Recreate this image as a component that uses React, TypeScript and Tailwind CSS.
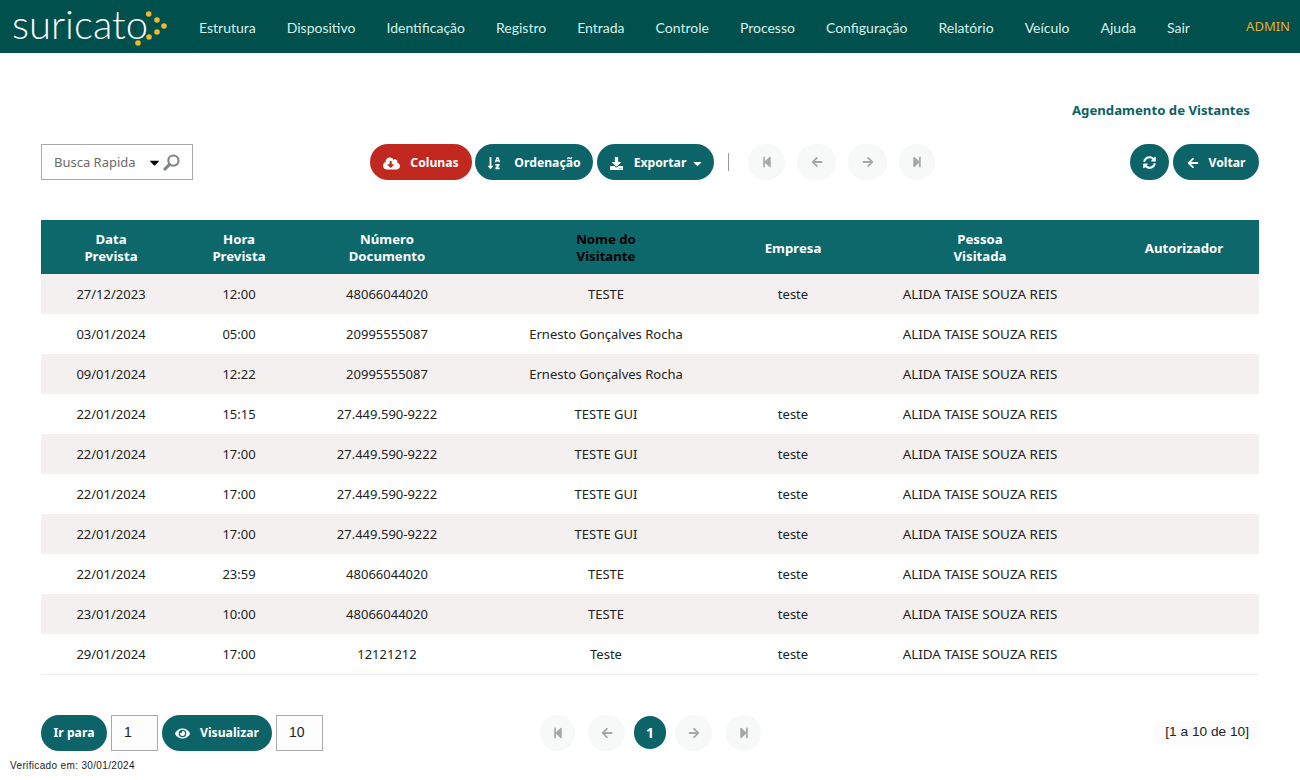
import {
  FaArrowLeft,
  FaArrowRight,
  FaCaretDown,
  FaCloudDownloadAlt,
  FaDownload,
  FaEye,
  FaSortAlphaDown,
  FaStepBackward,
  FaStepForward,
  FaSyncAlt,
} from "react-icons/fa";

const menu = [
  "Estrutura",
  "Dispositivo",
  "Identificação",
  "Registro",
  "Entrada",
  "Controle",
  "Processo",
  "Configuração",
  "Relatório",
  "Veículo",
  "Ajuda",
  "Sair",
];

const rows = [
  ["27/12/2023", "12:00", "48066044020", "TESTE", "teste"],
  ["03/01/2024", "05:00", "20995555087", "Ernesto Gonçalves Rocha", ""],
  ["09/01/2024", "12:22", "20995555087", "Ernesto Gonçalves Rocha", ""],
  ["22/01/2024", "15:15", "27.449.590-9222", "TESTE GUI", "teste"],
  ["22/01/2024", "17:00", "27.449.590-9222", "TESTE GUI", "teste"],
  ["22/01/2024", "17:00", "27.449.590-9222", "TESTE GUI", "teste"],
  ["22/01/2024", "17:00", "27.449.590-9222", "TESTE GUI", "teste"],
  ["22/01/2024", "23:59", "48066044020", "TESTE", "teste"],
  ["23/01/2024", "10:00", "48066044020", "TESTE", "teste"],
  ["29/01/2024", "17:00", "12121212", "Teste", "teste"],
];

function Logo() {
  return (
    <div className="flex items-center">
      <span className="text-[40px] font-light leading-none text-white mb-[5px] font-[Lato,sans-serif]">
        suricato
      </span>
      <svg width="34" height="44" viewBox="0 0 34 44" className="ml-[-13px]">
        <g fill="#f0b72f">
          <circle cx="13.7" cy="9" r="2.8" />
          <circle cx="22" cy="15" r="2.8" />
          <circle cx="29" cy="21" r="2.8" />
          <circle cx="22" cy="27" r="2.8" />
          <circle cx="14" cy="32" r="2.8" />
          <circle cx="3" cy="38" r="2.8" />
        </g>
      </svg>
    </div>
  );
}

function PillButton({ children, width, red }: { children: React.ReactNode; width: string; red?: boolean }) {
  return (
    <button
      className={`${width} h-9 pt-[2px] rounded-full flex items-center justify-center text-white text-[12.2px] font-bold font-[Noto_Sans,sans-serif] ${
        red ? "bg-[#c1281f]" : "bg-[#0d6468]"
      }`}
    >
      {children}
    </button>
  );
}

function GhostButton({ children, size }: { children: React.ReactNode; size: string }) {
  return (
    <div
      className={`h-9 ${size} rounded-full bg-[#f7f8f8] flex items-center justify-center text-[#a3a8a8] text-[12px]`}
    >
      {children}
    </div>
  );
}

export default function App() {
  return (
    <div className="w-[1300px] h-[780px] bg-white overflow-hidden font-[Noto_Sans,sans-serif] text-[13px] text-[#222]">
      <nav className="h-[53px] bg-[#00504d] flex items-center pl-[12px] pr-[10px]">
        <div className="w-[187px]">
          <Logo />
        </div>
        <ul className="flex gap-[31px] pt-[2px] text-[14px] text-[#d9f0ea] font-[Lato,sans-serif]">
          {menu.map((item) => (
            <li key={item}>{item}</li>
          ))}
        </ul>
        <span className="ml-auto text-[13px] text-[#e8ae2c]">ADMIN</span>
      </nav>

      <div className="px-[41px]">
        <div className="h-[91px] flex justify-end items-end pr-[9px] pb-[23px]">
          <h1 className="text-[13.2px] font-bold text-[#0d5f66]">Agendamento de Vistantes</h1>
        </div>

        <div className="flex items-center h-9">
          <div className="w-[152px] h-9 pt-[1px] bg-white border border-[#a9a9a9] flex items-center pl-3 pr-[12px] text-[#6b6b6b]">
            <span>Busca Rapida</span>
            <FaCaretDown className="ml-auto text-black text-[15px]" />
            <svg width="17" height="17" viewBox="0 0 16 16" className="ml-[1px]" fill="none" stroke="#7d8585">
              <circle cx="9.8" cy="6.2" r="4.8" strokeWidth="2" />
              <path d="M6 10 1.8 14.2" strokeWidth="2.8" strokeLinecap="round" />
            </svg>
          </div>

          <div className="ml-[177px] flex items-center gap-[3px]">
            <PillButton red width="w-[102px]">
              <FaCloudDownloadAlt className="text-[17px] mr-[10px]" />
              Colunas
            </PillButton>
            <PillButton width="w-[118px]">
              <FaSortAlphaDown className="text-[14px] mr-[13px]" />
              Ordenação
            </PillButton>
            <PillButton width="w-[117px] ml-[1px] pl-[3px]">
              <FaDownload className="text-[13px] mr-[11px]" />
              Exportar
              <FaCaretDown className="text-[13px] ml-[5px]" />
            </PillButton>
          </div>

          <div className="ml-[14px] w-px h-[18px] bg-[#9a9a9a]" />

          <div className="ml-[19px] flex items-center gap-[12px]">
            <GhostButton size="w-[37px]">
              <FaStepBackward />
            </GhostButton>
            <GhostButton size="w-[39px]">
              <FaArrowLeft />
            </GhostButton>
            <GhostButton size="w-[39px]">
              <FaArrowRight />
            </GhostButton>
            <GhostButton size="w-[36px]">
              <FaStepForward />
            </GhostButton>
          </div>

          <div className="ml-auto flex items-center gap-[4px]">
            <div className="w-[39px] h-9 rounded-full bg-[#0d6468] flex items-center justify-center text-white text-[13px]">
              <FaSyncAlt />
            </div>
            <PillButton width="w-[86px]">
              <FaArrowLeft className="text-[12px] mr-[10px]" />
              Voltar
            </PillButton>
          </div>
        </div>

        <table className="mt-[40px] w-[1218px] table-fixed border-collapse">
          <colgroup>
            <col className="w-[140px]" />
            <col className="w-[116px]" />
            <col className="w-[180px]" />
            <col className="w-[258px]" />
            <col className="w-[116px]" />
            <col className="w-[258px]" />
            <col className="w-[150px]" />
          </colgroup>
          <thead>
            <tr className="h-[54px] bg-[#0d686c] text-white text-[13.2px] font-bold leading-[17px]">
              <th className="pt-[2px]">
                Data
                <br />
                Prevista
              </th>
              <th className="pt-[2px]">
                Hora
                <br />
                Prevista
              </th>
              <th className="pt-[2px]">
                Número
                <br />
                Documento
              </th>
              <th className="pt-[2px] text-black">
                Nome do
                <br />
                Visitante
              </th>
              <th className="pt-[2px]">Empresa</th>
              <th className="pt-[2px]">
                Pessoa
                <br />
                Visitada
              </th>
              <th className="pt-[2px]">Autorizador</th>
            </tr>
          </thead>
          <tbody>
            {rows.map((row, i) => (
              <tr
                key={i}
                className={`h-10 text-center ${i % 2 === 0 ? "bg-[#f4f0f0]" : "bg-white"} ${
                  i === rows.length - 1 ? "border-b border-[#eeeeee]" : ""
                }`}
              >
                {row.map((cell, j) => (
                  <td key={j} className="pt-[2px]">
                    {cell}
                  </td>
                ))}
                <td className="text-[13.4px]">ALIDA TAISE SOUZA REIS</td>
                <td></td>
              </tr>
            ))}
          </tbody>
        </table>

        <div className="mt-[40px] flex items-center h-9">
          <div className="flex items-center gap-[4px]">
            <PillButton width="w-[66px]">Ir para</PillButton>
            <div className="w-[47px] h-9 border border-[#a9a9a9] bg-[#fdfdfd] flex items-center pl-3 text-[14px] font-[Liberation_Sans,sans-serif]">
              1
            </div>
            <PillButton width="w-[110px]">
              <FaEye className="text-[15px] mr-[10px]" />
              Visualizar
            </PillButton>
            <div className="w-[47px] h-9 border border-[#a9a9a9] bg-[#fdfdfd] flex items-center pl-3 text-[14px] font-[Liberation_Sans,sans-serif]">
              10
            </div>
          </div>

          <div className="ml-[217px] flex items-center gap-[13px]">
            <GhostButton size="w-[35px]">
              <FaStepBackward />
            </GhostButton>
            <GhostButton size="w-[37px]">
              <FaArrowLeft />
            </GhostButton>
            <div className="w-[32px] h-[33px] -mx-[4px] rounded-full bg-[#0d6468] text-white text-[14px] font-bold flex items-center justify-center">
              1
            </div>
            <GhostButton size="w-[37px]">
              <FaArrowRight />
            </GhostButton>
            <GhostButton size="w-[35px] ml-[1px]">
              <FaStepForward />
            </GhostButton>
          </div>

          <div className="ml-auto px-[10px] h-[24px] flex items-center bg-[#fcfcfc] text-[13.7px] text-[#222] font-[Liberation_Sans,sans-serif]">
            [1 a 10 de 10]
          </div>
        </div>
      </div>

      <div className="pl-[10px] mt-[10px] text-[10px] leading-none font-[Liberation_Sans,sans-serif] tracking-[0.35px] text-[#222]">
        Verificado em: 30/01/2024
      </div>
    </div>
  );
}
